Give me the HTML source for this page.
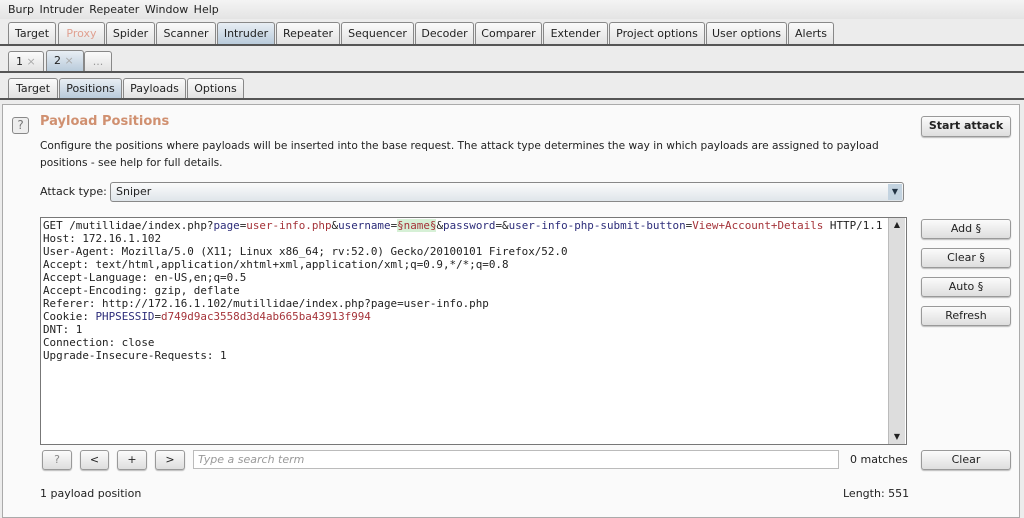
<!DOCTYPE html><html><head><style>
*{box-sizing:border-box;margin:0;padding:0}
body{width:1024px;height:518px;background:#ececec;font-family:"DejaVu Sans","Liberation Sans",sans-serif;font-size:11px;color:#222;position:relative;overflow:hidden}
.a{position:absolute}
.tab{position:absolute;height:22px;border:1px solid #888;border-bottom:none;border-radius:3px 3px 0 0;background:linear-gradient(#fafafa,#e2e2e2);text-align:center;line-height:21px;font-size:11px}
.sel{background:linear-gradient(#e8eef4,#b9cbdb)}
.btn{position:absolute;border:1px solid #999;border-radius:3px;background:linear-gradient(#fbfbfb,#dedede);text-align:center;font-size:11px;line-height:18px;box-shadow:0 1px 1px #bbb}
.mono{font-family:"DejaVu Sans Mono","Liberation Mono",monospace;font-size:10.9px;line-height:13px;white-space:pre}
.r{color:#a5343a}.b{color:#2d2d7a}
</style></head><body>
<div class="a" style="left:0;top:0;width:1024px;height:19px;background:linear-gradient(#f4f4f4,#e4e4e4);line-height:19px;padding-left:8px;word-spacing:2px">Burp Intruder Repeater Window Help</div>
<div class="tab" style="left:8px;top:22px;width:48px">Target</div>
<div class="tab" style="left:58px;top:22px;width:47px;color:#e0a090">Proxy</div>
<div class="tab" style="left:106px;top:22px;width:49px">Spider</div>
<div class="tab" style="left:156px;top:22px;width:60px">Scanner</div>
<div class="tab sel" style="left:217px;top:22px;width:58px">Intruder</div>
<div class="tab" style="left:276px;top:22px;width:64px">Repeater</div>
<div class="tab" style="left:341px;top:22px;width:73px">Sequencer</div>
<div class="tab" style="left:415px;top:22px;width:59px">Decoder</div>
<div class="tab" style="left:475px;top:22px;width:67px">Comparer</div>
<div class="tab" style="left:543px;top:22px;width:65px">Extender</div>
<div class="tab" style="left:609px;top:22px;width:96px">Project options</div>
<div class="tab" style="left:706px;top:22px;width:81px">User options</div>
<div class="tab" style="left:788px;top:22px;width:46px">Alerts</div>
<div class="a" style="left:0;top:44px;width:1024px;height:2px;background:#555"></div>
<div class="tab" style="left:8px;top:51px;width:36px;height:20px;line-height:19px;text-align:left;padding-left:7px">1 <span style="color:#aaa">×</span></div>
<div class="tab sel" style="left:46px;top:50px;width:38px;height:21px;line-height:20px;text-align:left;padding-left:7px">2 <span style="color:#aaa">×</span></div>
<div class="tab" style="left:84px;top:51px;width:28px;height:20px;line-height:19px;color:#999">...</div>
<div class="a" style="left:0;top:71px;width:1024px;height:2px;background:#555"></div>
<div class="tab" style="left:8px;top:78px;width:50px;height:20px;line-height:19px">Target</div>
<div class="tab sel" style="left:59px;top:78px;width:63px;height:20px;line-height:19px">Positions</div>
<div class="tab" style="left:123px;top:78px;width:63px;height:20px;line-height:19px">Payloads</div>
<div class="tab" style="left:187px;top:78px;width:57px;height:20px;line-height:19px">Options</div>
<div class="a" style="left:0;top:98px;width:1024px;height:2px;background:#555"></div>
<div class="a" style="left:2px;top:104px;width:1018px;height:414px;background:#fafafa;border:1px solid #aaa"></div>
<div class="a" style="left:12px;top:117px;width:17px;height:17px;border:1px solid #888;border-radius:3px;background:#eee;text-align:center;line-height:15px;color:#777;font-size:12px">?</div>
<div class="a" style="left:40px;top:114px;font-size:13px;font-weight:bold;color:#d09070">Payload Positions</div>
<div class="a" style="left:40px;top:138px;width:860px;line-height:17px;font-size:10.6px">Configure the positions where payloads will be inserted into the base request. The attack type determines the way in which payloads are assigned to payload positions - see help for full details.</div>
<div class="a" style="left:40px;top:185px">Attack type:</div>
<div class="a" style="left:110px;top:182px;width:794px;height:20px;border:1px solid #888;border-radius:3px;background:linear-gradient(#fbfbfb,#dfe5ea);line-height:18px;padding-left:5px">Sniper<div class="a" style="right:1px;top:1px;width:14px;height:16px;background:#c3d3e0;font-size:8px;text-align:center;line-height:16px;color:#234">▼</div></div>
<div class="btn" style="left:921px;top:116px;width:90px;height:21px;font-weight:bold">Start attack</div>
<div class="a mono" style="left:40px;top:217px;width:867px;height:228px;background:#fff;border:1px solid #777;padding:1px 2px;overflow:hidden">GET /mutillidae/index.php?<span class="b">page</span>=<span class="r">user-info.php</span>&amp;<span class="b">username</span>=<span style="background:#d6f0d6" class="r">§name§</span>&amp;<span class="b">password</span>=&amp;<span class="b">user-info-php-submit-button</span>=<span class="r">View+Account+Details</span> HTTP/1.1
Host: 172.16.1.102
User-Agent: Mozilla/5.0 (X11; Linux x86_64; rv:52.0) Gecko/20100101 Firefox/52.0
Accept: text/html,application/xhtml+xml,application/xml;q=0.9,*/*;q=0.8
Accept-Language: en-US,en;q=0.5
Accept-Encoding: gzip, deflate
Referer: http://172.16.1.102/mutillidae/index.php?page=user-info.php
Cookie: <span class="b">PHPSESSID</span>=<span class="r">d749d9ac3558d3d4ab665ba43913f994</span>
DNT: 1
Connection: close
Upgrade-Insecure-Requests: 1</div>
<div class="a" style="left:888px;top:218px;width:17px;height:226px;background:#ddd;border-left:1px solid #bbb"><div style="text-align:center;font-size:8px;line-height:14px">▲</div><div style="position:absolute;bottom:0;width:100%;text-align:center;font-size:8px;line-height:14px">▼</div></div>
<div class="btn" style="left:921px;top:219px;width:90px;height:20px">Add §</div>
<div class="btn" style="left:921px;top:248px;width:90px;height:20px">Clear §</div>
<div class="btn" style="left:921px;top:277px;width:90px;height:20px">Auto §</div>
<div class="btn" style="left:921px;top:306px;width:90px;height:20px">Refresh</div>
<div class="btn" style="left:42px;top:450px;width:30px;height:20px;color:#888">?</div>
<div class="btn" style="left:80px;top:450px;width:29px;height:20px">&lt;</div>
<div class="btn" style="left:117px;top:450px;width:30px;height:20px">+</div>
<div class="btn" style="left:155px;top:450px;width:30px;height:20px">&gt;</div>
<div class="a" style="left:193px;top:450px;width:646px;height:19px;background:#fff;border:1px solid #bbb;padding-left:4px;line-height:17px;font-style:italic;color:#999">Type a search term</div>
<div class="a" style="left:850px;top:453px">0 matches</div>
<div class="btn" style="left:921px;top:450px;width:90px;height:20px">Clear</div>
<div class="a" style="left:40px;top:487px">1 payload position</div>
<div class="a" style="left:843px;top:487px">Length: 551</div>
</body></html>
